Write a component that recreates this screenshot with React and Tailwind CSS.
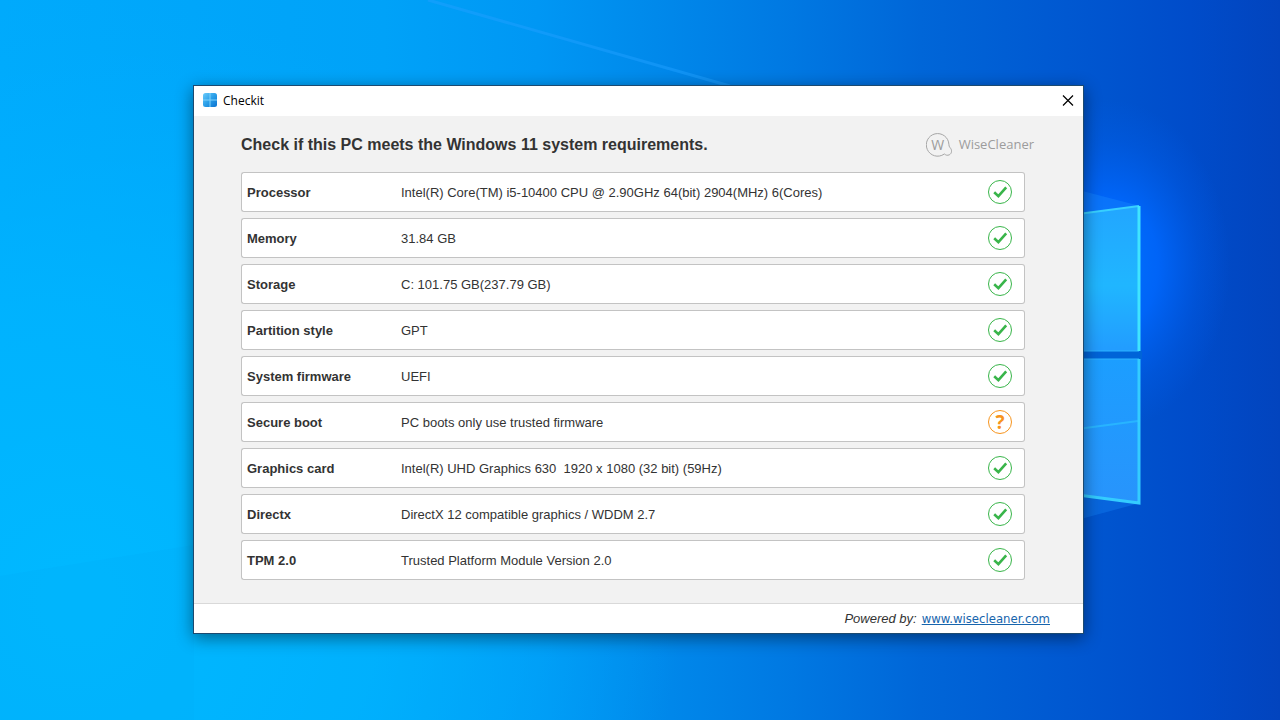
const CHECKS = [
  {
    label: 'Processor',
    value: 'Intel(R) Core(TM) i5-10400 CPU @ 2.90GHz 64(bit) 2904(MHz) 6(Cores)',
    status: 'pass',
  },
  { label: 'Memory', value: '31.84 GB', status: 'pass' },
  { label: 'Storage', value: 'C: 101.75 GB(237.79 GB)', status: 'pass' },
  { label: 'Partition style', value: 'GPT', status: 'pass' },
  { label: 'System firmware', value: 'UEFI', status: 'pass' },
  {
    label: 'Secure boot',
    value: 'PC boots only use trusted firmware',
    status: 'unknown',
  },
  {
    label: 'Graphics card',
    value: 'Intel(R) UHD Graphics 630  1920 x 1080 (32 bit) (59Hz)',
    status: 'pass',
  },
  {
    label: 'Directx',
    value: 'DirectX 12 compatible graphics / WDDM 2.7',
    status: 'pass',
  },
  {
    label: 'TPM 2.0',
    value: 'Trusted Platform Module Version 2.0',
    status: 'pass',
  },
]

function Wallpaper() {
  return (
    <svg
      className="absolute inset-0 h-full w-full"
      viewBox="0 0 1280 720"
      preserveAspectRatio="xMidYMid slice"
      aria-hidden="true"
    >
      <defs>
        <linearGradient id="sky" x1="0" y1="0" x2="1" y2="0">
          <stop offset="0" stopColor="#00aafc" />
          <stop offset="0.3" stopColor="#00a2f8" />
          <stop offset="0.42" stopColor="#0097f4" />
          <stop offset="0.5" stopColor="#008bec" />
          <stop offset="0.62" stopColor="#0078e2" />
          <stop offset="0.72" stopColor="#0066d8" />
          <stop offset="0.85" stopColor="#0056d0" />
          <stop offset="0.93" stopColor="#004cca" />
          <stop offset="1" stopColor="#0244be" />
        </linearGradient>
        <radialGradient
          id="corner"
          gradientUnits="userSpaceOnUse"
          cx="80"
          cy="600"
          r="600"
        >
          <stop offset="0" stopColor="#00b9ff" />
          <stop offset="0.5" stopColor="#00b6ff" stopOpacity="0.7" />
          <stop offset="1" stopColor="#00b0ff" stopOpacity="0" />
        </radialGradient>
        <radialGradient
          id="glow"
          gradientUnits="userSpaceOnUse"
          cx="0"
          cy="0"
          r="1"
          gradientTransform="translate(1110 265) scale(120 165)"
        >
          <stop offset="0" stopColor="#0072ff" />
          <stop offset="0.4" stopColor="#0068ff" stopOpacity="0.85" />
          <stop offset="0.75" stopColor="#0062f4" stopOpacity="0.3" />
          <stop offset="1" stopColor="#0060f0" stopOpacity="0" />
        </radialGradient>
        <linearGradient id="paneTop" x1="0" y1="0" x2="0" y2="1">
          <stop offset="0" stopColor="#22a6ff" />
          <stop offset="0.55" stopColor="#20b6ff" />
          <stop offset="1" stopColor="#229cff" />
        </linearGradient>
        <linearGradient id="paneBottom" x1="0" y1="0" x2="0" y2="1">
          <stop offset="0" stopColor="#1c9eff" />
          <stop offset="1" stopColor="#2894fc" />
        </linearGradient>
      </defs>

      <rect width="1280" height="720" fill="url(#sky)" />
      <rect width="1280" height="720" fill="url(#corner)" />
      <rect width="1280" height="720" fill="url(#glow)" />

      {/* light beams */}
      <path d="M428 0 730 86" stroke="#20a0ff" strokeWidth="3" strokeOpacity="0.5" />
      <path d="M0 576 194 545V720H0Z" fill="#00b0f8" fillOpacity="0.35" />
      <path d="M1040 180 1140 206 1040 218Z" fill="#1c90ff" fillOpacity="0.35" />
      <path d="M1040 530 1140 503 1040 490Z" fill="#1c90ff" fillOpacity="0.3" />

      {/* window panes */}
      <path d="M1040 219 1139 206V351H1040Z" fill="url(#paneTop)" />
      <path d="M1040 359H1139V503L1040 491Z" fill="url(#paneBottom)" />
      <path d="M1040 351H1142V359H1040Z" fill="#0064d8" />
      <path d="M1040 434 1138 421" stroke="#28b4ff" strokeWidth="2" />
      <path d="M1040 219 1139 206" stroke="#38d0ff" strokeWidth="2" />
      <path d="M1040 351H1139M1040 359H1139" stroke="#2ab2ff" strokeWidth="1" />
      <path d="M1139 206V351" stroke="#40e4ff" strokeWidth="3" />
      <path d="M1139 359V503L1040 490" fill="none" stroke="#34ccff" strokeWidth="3" />
    </svg>
  )
}

function AppIcon() {
  return (
    <svg className="size-4" viewBox="0 0 16 16" aria-hidden="true">
      <defs>
        <linearGradient id="tile" x1="0" y1="0" x2="1" y2="1">
          <stop offset="0" stopColor="#6cccfb" />
          <stop offset="0.5" stopColor="#2b9fe8" />
          <stop offset="1" stopColor="#0b72d0" />
        </linearGradient>
      </defs>
      <rect x="1" y="0" width="14" height="14" rx="2.5" fill="url(#tile)" />
      <path d="M8 0V14M1 7H15" stroke="#7fd2fb" strokeWidth="1" />
    </svg>
  )
}

function BrandLogo() {
  return (
    <svg className="size-[26px]" viewBox="0 0 26 26" aria-hidden="true">
      <path
        d="M18 22.2A11.3 11.3 0 1 1 22.9 12.3C22.9 13.8 23.2 14.6 24 15.6C26.5 18.2 25.8 21.6 23.3 22.8C21.4 23.7 19.8 23.2 18.8 22.2C18.4 21.9 18.2 22 18 22.2Z"
        fill="none"
        stroke="#a6a6a6"
        strokeWidth="1"
      />
      <text
        x="11.6"
        y="17.5"
        textAnchor="middle"
        fontSize="14"
        fill="#9c9c9c"
        className="font-['Open_Sans',sans-serif]"
      >
        W
      </text>
    </svg>
  )
}

function StatusIcon({ status }) {
  if (status === 'unknown') {
    return (
      <span className="flex size-6 items-center justify-center rounded-full border border-[#f7941d] font-['Open_Sans',sans-serif] text-[19px] leading-none font-bold text-[#f7941d]">
        ?
      </span>
    )
  }
  return (
    <svg className="block size-6" viewBox="0 0 24 24" fill="none" role="img" aria-label="Passed">
      <circle cx="12" cy="12" r="11.5" stroke="#39b54a" />
      <path d="M6.2 12.2 10.4 16.2 18.2 7.4" stroke="#39b54a" strokeWidth="2.6" />
    </svg>
  )
}

export default function App() {
  return (
    <div className="relative min-h-screen overflow-hidden bg-[#0078e4] font-['Liberation_Sans',Arial,sans-serif] text-[#333]">
      <Wallpaper />

      <div className="relative pt-[85px] pr-[196px] pb-[86px] pl-[193px]">
        <main className="border border-[#1c4a70] bg-[#f2f2f2] shadow-[0_4px_16px_rgba(0,0,0,0.45)]">
          <div className="flex h-[30px] items-center justify-between bg-white pr-[7px] pl-2">
            <div className="flex items-center gap-[5px] font-['Open_Sans',sans-serif] text-xs text-black">
              <AppIcon />
              <span>Checkit</span>
            </div>
            <button type="button" aria-label="Close" className="p-0.5 text-black">
              <svg className="block size-3" viewBox="0 0 12 12" aria-hidden="true">
                <path d="M1 0.5 11 10.5M11 0.5 1 10.5" stroke="currentColor" strokeWidth="1.2" />
              </svg>
            </button>
          </div>

          <header className="flex items-center justify-between pt-4 pr-[49px] pb-2 pl-[47px]">
            <h1 className="text-base leading-6 font-bold">
              Check if this PC meets the Windows 11 system requirements.
            </h1>
            <div className="flex items-center gap-[7px] font-['Open_Sans',sans-serif] text-[13px] text-[#9c9c9c]">
              <BrandLogo />
              <span>WiseCleaner</span>
            </div>
          </header>

          <div className="pr-[58px] pb-[17px] pl-[47px]">
            <table className="w-full border-separate border-spacing-x-0 border-spacing-y-[6px] text-[13px] leading-5">
              <tbody>
                {CHECKS.map((c) => (
                  <tr key={c.label}>
                    <th
                      scope="row"
                      className="h-10 w-40 rounded-l-[3px] border-y border-l border-[#c3c3c3] bg-white p-0 pt-0.5 pl-[5px] text-left font-bold"
                    >
                      {c.label}
                    </th>
                    <td className="h-10 border-y border-[#c3c3c3] bg-white p-0 pt-0.5 whitespace-pre-wrap">
                      {c.value}
                    </td>
                    <td className="h-10 w-[37px] rounded-r-[3px] border-y border-r border-[#c3c3c3] bg-white p-0 pr-3">
                      <StatusIcon status={c.status} />
                    </td>
                  </tr>
                ))}
              </tbody>
            </table>
          </div>

          <footer className="flex h-[30px] items-center justify-end gap-[5px] border-t border-[#d9d9d9] bg-white pr-[33px] text-[13px]">
            <span className="italic">Powered by:</span>
            <a
              href="#wisecleaner"
              className="font-['DejaVu_Sans_Condensed','DejaVu_Sans',sans-serif] text-[#1765ad] underline"
            >
              www.wisecleaner.com
            </a>
          </footer>
        </main>
      </div>
    </div>
  )
}
